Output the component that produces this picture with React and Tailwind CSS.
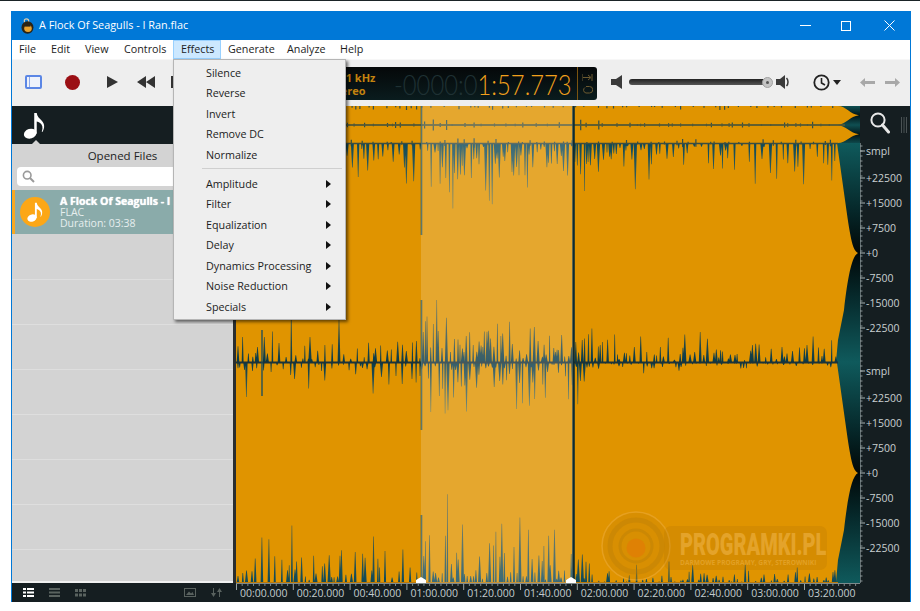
import React from 'react';

const FONT = { fontFamily: '"Open Sans","Noto Sans",sans-serif' };

function rng(seed) {
  let s = seed;
  return () => {
    s = (s * 1664525 + 1013904223) % 4294967296;
    return s / 4294967296;
  };
}

function region(x, tail) {
  if (x < 300) return 0.8;
  if (x >= 421 && x < 470) return 1;
  if (x >= 470 && x < 535) return 0.75;
  if (x >= 572 && x < 592) return 0.8;
  if (x >= 838) return 0;
  if (x >= 592) return 0.6 * tail;
  return 0.6;
}

function spikes(seed, y0, dir, maxLen, tail, pow) {
  const r = rng(seed);
  let d = '';
  let x = 238;
  while (x < 836) {
    const v = Math.pow(r(), pow);
    const len = Math.max(1.5, maxLen * region(x, tail) * (0.1 + 0.9 * v) * (r() < 0.4 ? 1.15 : 0.7));
    const w = 0.7 + r() * 1;
    d += `M${(x - w).toFixed(1)} ${y0}L${(x - 0.3).toFixed(1)} ${(y0 + dir * len).toFixed(1)}L${(x + 0.3).toFixed(1)} ${(y0 + dir * len).toFixed(1)}L${(x + w).toFixed(1)} ${y0}Z`;
    x += 1.5 + r() * (x > 592 || x < 421 ? 6 : 3);
  }
  return d;
}

function mini(seed, y0) {
  const r = rng(seed);
  let d = '';
  for (let x = 238; x < 836; x += 3 + r() * 12) {
    const a = 1 + r() * r() * 3 * (region(x, 1) * 2);
    d += `M${x.toFixed(1)} ${y0 - a}V${y0 + a}`;
  }
  return d;
}

const W1 = spikes(11, 143, 1, 72, 1, 1.4);
const W2 = spikes(23, 362, -1, 64, 0.7, 1.2);
const W3 = spikes(37, 362, 1, 56, 0.3, 1.6);
const W4 = spikes(51, 583, -1, 78, 0.4, 2);
const M1 = mini(7, 125);
const M2 = mini(9, 106);
const M3 = mini(13, 143);

function lobe(y0, y1) {
  const m = (y0 + y1) / 2;
  return `M236 ${y0}H838C846 ${y0} 850 ${m - 1} 859 ${m}C850 ${m + 1} 846 ${y1} 838 ${y1}H236Z`;
}
function env(o) {
  return `M236 ${143 + o}H837L845 ${200 + o}C850 ${235 + o} 852 ${250 + o} 858 ${253 + o}C852 ${256 + o} 848 ${275 + o} 844 ${310 + o}L838 ${340 + o}L836 ${362 + o}H236Z`;
}

function Wave() {
  return (
    <svg viewBox="236 106 624 477" className="w-[624px] h-[477px] block">
      <defs>
        <linearGradient id="ch1" x1="0" y1="143" x2="0" y2="362" gradientUnits="userSpaceOnUse">
          <stop offset="0" stopColor="#0f5a5c" />
          <stop offset="0.3" stopColor="#06292b" />
          <stop offset="0.5" stopColor="#010808" />
          <stop offset="0.7" stopColor="#06292b" />
          <stop offset="1" stopColor="#0f5a5c" />
        </linearGradient>
        <linearGradient id="ch2" x1="0" y1="362" x2="0" y2="583" gradientUnits="userSpaceOnUse">
          <stop offset="0" stopColor="#0f5a5c" />
          <stop offset="0.3" stopColor="#06292b" />
          <stop offset="0.5" stopColor="#010808" />
          <stop offset="0.7" stopColor="#06292b" />
          <stop offset="1" stopColor="#0f5a5c" />
        </linearGradient>
        <linearGradient id="ov" x1="0" y1="106" x2="0" y2="125" gradientUnits="userSpaceOnUse" spreadMethod="reflect">
          <stop offset="0" stopColor="#0f4f52" />
          <stop offset="0.5" stopColor="#031416" />
          <stop offset="1" stopColor="#0f4f52" />
        </linearGradient>
        <linearGradient id="s1" x1="0" y1="143" x2="0" y2="205" gradientUnits="userSpaceOnUse">
          <stop offset="0" stopColor="#0e4a5a" />
          <stop offset="1" stopColor="#2d5f6a" stopOpacity="0.8" />
        </linearGradient>
        <linearGradient id="s2" x1="0" y1="362" x2="0" y2="305" gradientUnits="userSpaceOnUse">
          <stop offset="0" stopColor="#093a48" />
          <stop offset="1" stopColor="#3a5650" stopOpacity="0.85" />
        </linearGradient>
        <linearGradient id="s3" x1="0" y1="362" x2="0" y2="410" gradientUnits="userSpaceOnUse">
          <stop offset="0" stopColor="#093a48" />
          <stop offset="1" stopColor="#2d6470" stopOpacity="0.8" />
        </linearGradient>
        <linearGradient id="s4" x1="0" y1="583" x2="0" y2="520" gradientUnits="userSpaceOnUse">
          <stop offset="0" stopColor="#0e4a5a" />
          <stop offset="1" stopColor="#3a5650" stopOpacity="0.85" />
        </linearGradient>
      </defs>
      <rect x="236" y="106" width="624" height="37" fill="url(#ov)" />
      <rect x="236" y="143" width="624" height="219" fill="url(#ch1)" />
      <rect x="236" y="362" width="624" height="221" fill="url(#ch2)" />
      <path d={lobe(106, 124.5)} fill="#e09400" />
      <path d={lobe(125.5, 143)} fill="#e09400" />
      <path d={env(0)} fill="#e09400" />
      <path d={env(220)} fill="#e09400" />
      <path d={M1} stroke="#2e4f4e" strokeWidth="1.2" />
      <path d={M2} stroke="#2e4f4e" strokeWidth="1.2" />
      <path d={M3} stroke="#2e4f4e" strokeWidth="1.2" />
      <path d="M236 125H845" stroke="#5c5a30" strokeWidth="1.4" />
      <path d={W1} fill="url(#s1)" />
      <path d={W2} fill="url(#s2)" />
      <path d={W3} fill="url(#s3)" />
      <path d={W4} fill="url(#s4)" />
      <path d="M236 143.5H838" stroke="#3c4e40" strokeWidth="1.4" />
      <path d="M236 362.5H838" stroke="#1c3338" strokeWidth="2" />
      <path d="M236 582.5H838" stroke="#b9780c" strokeWidth="1" />
      <path d="M262 330V396M421.5 106V235M421.5 300V430M421.5 515V583" stroke="#1e4f5a" strokeWidth="1.6" opacity="0.85" />
      <path d="M573.5 106V583" stroke="#0d2c32" strokeWidth="2.6" />
      <rect x="421" y="106" width="152" height="477" fill="#fff" opacity="0.18" />
      <circle cx="636" cy="546" r="34" fill="#d08a05" stroke="#eeb048" strokeWidth="1.5" opacity="0.45" />
      <circle cx="636" cy="546" r="26" fill="none" stroke="#b87c08" strokeWidth="5" opacity="0.35" />
      <circle cx="636" cy="546" r="16" fill="none" stroke="#b87c08" strokeWidth="3" opacity="0.4" />
      <circle cx="636" cy="548" r="9.5" fill="#e07f05" opacity="0.85" />
      <rect x="664" y="526" width="163" height="44" rx="7" fill="#a86e05" opacity="0.2" />
      <text transform="translate(680 555) scale(1 1.6)" fontFamily="'Roboto',sans-serif" fontWeight="900" fontSize="20" fill="#ebae3c" opacity="0.7">
        PROGRAMKI.PL
      </text>
      <text x="680" y="565" fontFamily="'Open Sans',sans-serif" fontWeight="700" fontSize="6.6" fill="#ebae3c" opacity="0.6">
        DARMOWE PROGRAMY, GRY, STEROWNIKI
      </text>
      <path d="M416 583V580L421 577L426 580V583ZM566 583V580L571 577L576 580V583Z" fill="#fff" />
    </svg>
  );
}

const SCALE = [
  ['smpl', 151], ['+22500', 178], ['+15000', 203], ['+7500', 228], ['+0', 253], ['-7500', 278], ['-15000', 303], ['-22500', 328],
  ['smpl', 371], ['+22500', 398], ['+15000', 423], ['+7500', 448], ['+0', 473], ['-7500', 498], ['-15000', 523], ['-22500', 548],
];

function Ruler() {
  const minor = [];
  for (let y = 146; y < 583; y += 5) minor.push(y);
  return (
    <svg viewBox="0 143 50 440" className="w-[50px] h-[440px] block">
      <path d="M0 143V583" stroke="#7d8a8c" strokeWidth="1.5" />
      {minor.map((y) => (
        <path key={y} d={`M0 ${y}H2.5`} stroke="#8b9698" strokeWidth="1" />
      ))}
      {SCALE.map(([t, y], i) => (
        <g key={i}>
          <path d={`M0 ${y}H5`} stroke="#aab4b5" strokeWidth="1" />
          <text x="6" y={y + 4} fontFamily="'Open Sans',sans-serif" fontSize="10.5" fill="#c9d0d1">
            {t}
          </text>
        </g>
      ))}
    </svg>
  );
}

function Note({ className }) {
  return (
    <svg viewBox="0 0 24 28" className={className} fill="currentColor">
      <ellipse cx="7" cy="22.5" rx="6.6" ry="5" transform="rotate(-18 7 22.5)" />
      <path d="M11.2 22V1h2.6c.4 3.6 2.6 5.4 5 7.8 3.2 3.2 3.6 7.4 1 11.6-.3.5-.9.2-.7-.3 1.4-3.6.6-6.8-1.8-8.6-1.2-.9-2.4-1.4-3.5-1.7V22.6z" />
    </svg>
  );
}

const MENU_A = ['Silence', 'Reverse', 'Invert', 'Remove DC', 'Normalize'];
const MENU_B = ['Amplitude', 'Filter', 'Equalization', 'Delay', 'Dynamics Processing', 'Noise Reduction', 'Specials'];
const TIMES = ['00:00.000', '00:20.000', '00:40.000', '01:00.000', '01:20.000', '01:40.000', '02:00.000', '02:20.000', '02:40.000', '03:00.000', '03:20.000'];
const BAR = [
  ['File', 'w-[32px] pl-[7px]'],
  ['Edit', 'w-[34px] pl-[7px]'],
  ['View', 'w-[39px] pl-[7px]'],
  ['Controls', 'w-[56px] pl-[7px]'],
  ['Effects', 'w-[48px] pl-[7px] bg-[#cce8ff] border border-[#99d1ff]'],
  ['Generate', 'w-[59px] pl-[7px]'],
  ['Analyze', 'w-[53px] pl-[7px]'],
  ['Help', 'w-[40px] pl-[7px]'],
];

function EffectsMenu() {
  const cls = 'h-[20.5px] flex items-center pl-[32px] pr-[14px] justify-between text-[10.75px] text-[#1c1c1c]';
  return (
    <div className="absolute left-[161px] top-[48px] w-[173px] h-[261px] bg-[#eeeeee] border border-[#b5b5b5] shadow-[2px_2px_3px_rgba(0,0,0,0.55)] z-20 pt-[2.5px]">
      {MENU_A.map((m) => (
        <div key={m} className={cls}>{m}</div>
      ))}
      <div className="h-px bg-[#cfcfcf] ml-[28px] mr-[3px] my-[3px]" />
      <div className="h-[1.5px]" />
      {MENU_B.map((m) => (
        <div key={m} className={cls}>
          <span>{m}</span>
          <svg width="5" height="8" viewBox="0 0 5 8"><path d="M0 0L5 4L0 8Z" fill="#111" /></svg>
        </div>
      ))}
    </div>
  );
}

function Toolbar() {
  return (
    <div className="h-[47px] bg-[#eeeeee] border-t border-[#f7f7f7] flex items-center shrink-0 pb-[2px]">
      <div className="ml-[13px] w-[17px] h-[14px] border-2 border-[#5b86e5] rounded-[2px] bg-[#eef2fb] flex">
        <div className="ml-[2px] w-px bg-[#8ea9e8]" />
      </div>
      <div className="ml-[23px] w-[15px] h-[15px] rounded-full bg-[#9b0f14]" />
      <svg className="ml-[27px]" width="11" height="12" viewBox="0 0 11 12"><path d="M0 0L11 6L0 12Z" fill="#333" /></svg>
      <svg className="ml-[19px]" width="18" height="12" viewBox="0 0 18 12"><path d="M9 0V12L0 6ZM18 0V12L9 6Z" fill="#333" /></svg>
      <div className="ml-[16px] w-[8px] h-[12px] bg-[#333]" />
      <div className="ml-[121px] mt-[3px] w-[297px] h-[33px] rounded-[3px] bg-gradient-to-b from-[#050809] to-[#0a1c1e] flex items-center overflow-hidden">
        <div className="ml-[30px] w-[64px] text-[11px] leading-[13px] font-bold text-[#c4830f] shrink-0" style={FONT}>
          <div>44.1 kHz</div>
          <div>Stereo</div>
        </div>
        <div className="w-[183px] shrink-0 whitespace-nowrap text-[28px] leading-none font-light origin-left scale-x-[0.85]" style={{ fontFamily: 'Lato,sans-serif' }}>
          <span className="text-[#1f3134]">-0000:0</span>
          <span className="text-[#f2a01c]">1:57.773</span>
        </div>
        <div className="h-full w-[20px] shrink-0 border-l border-[#7a5410] flex flex-col items-center justify-center gap-[4px]">
          <svg width="11" height="7" viewBox="0 0 11 7"><path d="M0 0V7M1 3.5H8M6 1L9 3.5L6 6M10 0V7" stroke="#6d5a30" fill="none" /></svg>
          <svg width="10" height="9" viewBox="0 0 10 9"><path d="M3 1.5H6.5A3 3 0 0 1 6.5 8H3A3 3 0 0 1 2 2.5" stroke="#6d5a30" fill="none" /></svg>
        </div>
      </div>
      <svg className="ml-[14px]" width="14" height="14" viewBox="0 0 14 14"><path d="M0 4H5L11 0V14L5 10H0Z" fill="#3a3a3a" /></svg>
      <div className="ml-[4px] w-[144px] flex items-center relative">
        <div className="w-[139px] h-[6px] rounded-full bg-gradient-to-b from-[#222] to-[#555]" />
        <div className="-ml-[6px] w-[11px] h-[11px] rounded-full bg-[#c4c4c4] border border-[#a0a0a0] flex items-center justify-center">
          <div className="w-[3px] h-[3px] rounded-full bg-[#555]" />
        </div>
      </div>
      <svg className="ml-[3px]" width="14" height="14" viewBox="0 0 14 14"><path d="M0 4H4L9 0V14L4 10H0Z" fill="#3a3a3a" /><path d="M10.5 3C12.5 5 12.5 9 10.5 11" stroke="#3a3a3a" strokeWidth="1.5" fill="none" /></svg>
      <svg className="ml-[23px]" width="17" height="17" viewBox="0 0 17 17"><circle cx="8.5" cy="8.5" r="7.2" fill="none" stroke="#222" strokeWidth="1.8" /><path d="M8.5 4V9L12 11" fill="none" stroke="#222" strokeWidth="1.6" /></svg>
      <svg className="ml-[3px]" width="8" height="5" viewBox="0 0 8 5"><path d="M0 0H8L4 5Z" fill="#222" /></svg>
      <svg className="ml-[19px]" width="15" height="9" viewBox="0 0 15 9"><path d="M0 4.5L5 0V3H15V6H5V9Z" fill="#a8a8a8" /></svg>
      <svg className="ml-[10px]" width="15" height="9" viewBox="0 0 15 9"><path d="M15 4.5L10 0V3H0V6H10V9Z" fill="#a8a8a8" /></svg>
    </div>
  );
}

function Sidebar() {
  return (
    <div className="w-[221px] shrink-0 flex flex-col bg-[#d3d3d3] border-b-2 border-[#f0f0f0] overflow-hidden">
      <div className="h-[38px] bg-[#151e21] relative shrink-0 pl-[11px] pt-[6px] text-white">
        <Note className="w-[24px] h-[27px]" />
        <div className="absolute left-[20px] bottom-0 w-0 h-0 border-l-[4px] border-r-[4px] border-b-[4px] border-l-transparent border-r-transparent border-b-[#d3d3d3]" />
      </div>
      <div className="h-[23px] shrink-0 flex items-center justify-center text-[11.5px] text-[#222] pt-[1px]">Opened Files</div>
      <div className="mx-[5px] h-[19px] rounded-[4px] bg-white flex items-center pl-[5px] shrink-0">
        <svg width="13" height="13" viewBox="0 0 13 13"><circle cx="5.2" cy="5.2" r="3.8" fill="none" stroke="#9a9a9a" strokeWidth="1.6" /><path d="M8 8L12 12" stroke="#9a9a9a" strokeWidth="2" /></svg>
      </div>
      <div className="mt-[4px] mb-px h-[44px] bg-[#8aabaa] border-l-[3px] border-[#f7a823] flex items-center shrink-0">
        <div className="ml-[5px] w-[30px] h-[30px] rounded-full bg-[#fca716] flex items-center justify-center text-white shrink-0">
          <Note className="w-[17px] h-[20px]" />
        </div>
        <div className="ml-[10px] text-[10.5px] leading-[11px] text-[#e6eeee] whitespace-nowrap">
          <div className="font-bold text-white [text-shadow:0_0_1px_#fff]">A Flock Of Seagulls - I Ran.flac</div>
          <div>FLAC</div>
          <div>Duration: 03:38</div>
        </div>
      </div>
      {[0, 1, 2, 3, 4, 5, 6, 7].map((i) => (
        <div key={i} className="h-[45px] border-b border-[#dedede] shrink-0" />
      ))}
    </div>
  );
}

function BottomBar() {
  const ticks = [];
  for (let i = 0; i < 110; i++) ticks.push(i);
  return (
    <div className="h-[19px] bg-[#151e21] flex shrink-0">
      <div className="w-[224px] shrink-0 flex items-center">
        <svg className="ml-[11px]" width="11" height="9" viewBox="0 0 11 9"><path d="M0 0H3V2H0ZM4 0H11V2H4ZM0 3.5H3V5.5H0ZM4 3.5H11V5.5H4ZM0 7H3V9H0ZM4 7H11V9H4Z" fill="#fff" /></svg>
        <svg className="ml-[15px]" width="11" height="9" viewBox="0 0 11 9"><path d="M0 0H11V2H0ZM0 3.5H11V5.5H0ZM0 7H11V9H0Z" fill="#59625f" /></svg>
        <svg className="ml-[15px]" width="11" height="8" viewBox="0 0 11 8"><path d="M0 0H3V3H0ZM4 0H7V3H4ZM8 0H11V3H8ZM0 4.5H3V7.5H0ZM4 4.5H7V7.5H4ZM8 4.5H11V7.5H8Z" fill="#59625f" /></svg>
        <svg className="ml-[98px]" width="12" height="9" viewBox="0 0 12 9"><rect x=".5" y=".5" width="11" height="8" fill="none" stroke="#59625f" /><path d="M2 7L5 3.5L7 5.5L8.5 4L10 7Z" fill="#59625f" /></svg>
        <svg className="ml-[15px]" width="11" height="9" viewBox="0 0 11 9"><path d="M3 0V5H5L2.5 9L0 5H2V0ZM8 9V4H6L8.5 0L11 4H9V9Z" fill="#59625f" /></svg>
      </div>
      <div className="w-[624px] relative flex pl-[4px] pt-[4px] text-[10.5px] leading-[12px] text-[#c3ccce] whitespace-nowrap">
        <svg className="absolute left-0 top-0" width="624" height="8" viewBox="0 0 624 8">
          {ticks.map((i) => (
            <path key={i} d={`M${0.5 + i * 5.68} 0V${i % 10 === 0 ? 7 : 3}`} stroke={i % 10 === 0 ? '#9aa5a6' : '#7d8a8c'} />
          ))}
          <path d="M0 0.5H624" stroke="#7d8a8c" />
        </svg>
        {TIMES.map((t) => (
          <div key={t} className="w-[56.8px] shrink-0">{t}</div>
        ))}
      </div>
      <div className="w-[50px]" />
    </div>
  );
}

export default function App() {
  return (
    <div className="w-[920px] h-[611px] bg-white border-t border-[#1a2326] pt-[10px] pl-[11px] overflow-hidden" style={FONT}>
      <div className="w-[900px] h-[591px] border-x border-b border-[#0078d7] flex flex-col relative">
        <div className="h-[29px] -mx-px bg-[#0078d7] flex items-center shrink-0 text-white">
          <svg className="ml-[10px]" width="13" height="16" viewBox="0 0 13 16">
            <circle cx="5.5" cy="3" r="2.2" fill="none" stroke="#d8cdb0" strokeWidth="1.2" />
            <ellipse cx="6.5" cy="9.5" rx="6" ry="6.2" fill="#2a2416" />
            <ellipse cx="7" cy="10.5" rx="3.8" ry="3.4" fill="#e8a22e" />
            <rect x="3.5" y="7" width="6" height="1.6" fill="#2a2416" />
          </svg>
          <div className="ml-[5px] text-[10.85px]">A Flock Of Seagulls - I Ran.flac</div>
          <svg className="ml-auto mr-[30px]" width="11" height="1" viewBox="0 0 11 1"><path d="M0 .5H11" stroke="#fff" /></svg>
          <svg className="mr-[33px]" width="10" height="10" viewBox="0 0 10 10"><rect x=".5" y=".5" width="9" height="9" fill="none" stroke="#fff" /></svg>
          <svg className="mr-[16px]" width="11" height="11" viewBox="0 0 11 11"><path d="M.5 .5L10.5 10.5M10.5 .5L.5 10.5" stroke="#fff" /></svg>
        </div>
        <div className="h-[19px] bg-white flex items-stretch text-[10.75px] text-[#1c1c1c] shrink-0">
          {BAR.map(([m, c]) => (
            <div key={m} className={`flex items-center shrink-0 ${c}`}>{m}</div>
          ))}
        </div>
        <EffectsMenu />
        <Toolbar />
        <div className="flex h-[477px] shrink-0">
          <Sidebar />
          <div className="w-[3px] bg-[#2a2e30] shrink-0" />
          <Wave />
          <div className="w-[50px] bg-[#151e21] flex flex-col shrink-0">
            <div className="h-[37px] relative shrink-0">
              <svg className="absolute left-[10px] top-[6px]" width="20" height="22" viewBox="0 0 20 22"><circle cx="8" cy="8" r="6.6" fill="none" stroke="#e8e8e8" strokeWidth="2" /><path d="M12.5 13L18.5 20" stroke="#e8e8e8" strokeWidth="3" strokeLinecap="round" /></svg>
              <svg className="absolute left-[41px] top-[11px]" width="8" height="16" viewBox="0 0 8 16"><path d="M.5 0V16M3 0V16M5.5 0V16" stroke="#4a5254" /></svg>
            </div>
            <Ruler />
          </div>
        </div>
        <BottomBar />
      </div>
    </div>
  );
}
